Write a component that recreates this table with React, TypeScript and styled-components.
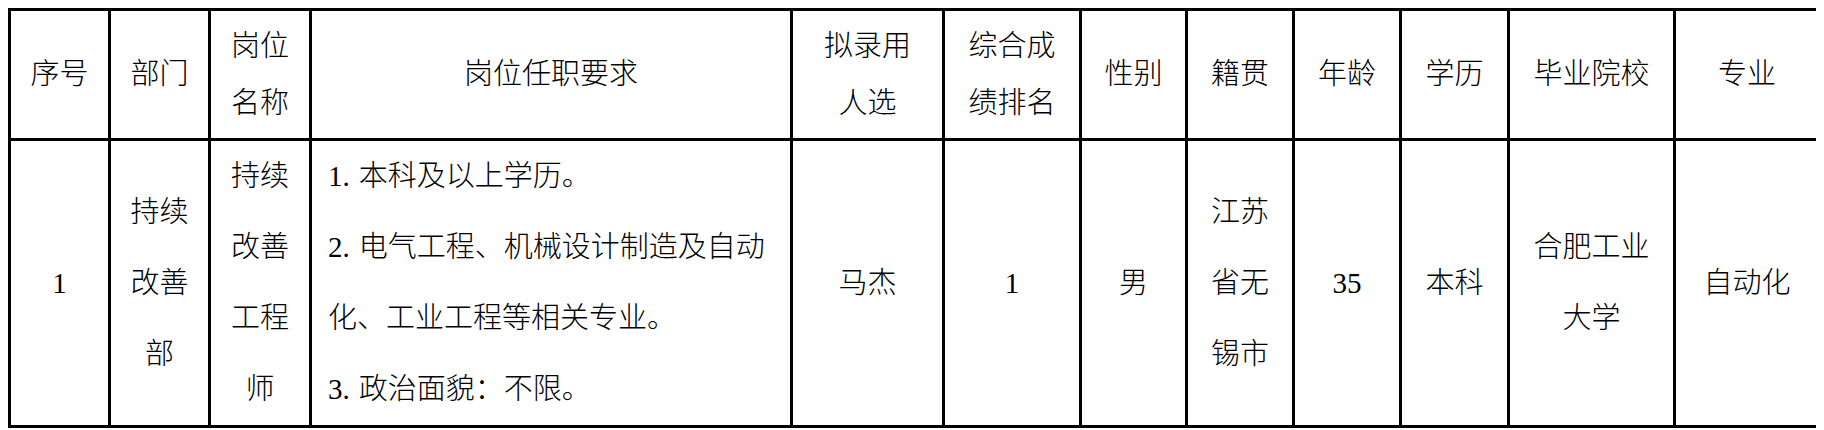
import styled, { createGlobalStyle } from "styled-components";

const GlobalStyle = createGlobalStyle`
  body {
    margin: 8px;
    background: #fff;
  }
`;

const columns = [100, 100, 101, 481, 152, 137, 106, 107, 107, 108, 166, 145];

const App: React.FC = () => {
  return (
    <>
      <GlobalStyle />
      <Table>
        <colgroup>
          {columns.map((w, i) => (
            <Col key={i} $w={w} />
          ))}
        </colgroup>
        <thead>
          <HeadRow>
            <HeadCell>序号</HeadCell>
            <HeadCell>部门</HeadCell>
            <HeadCell>
              岗位
              <br />
              名称
            </HeadCell>
            <HeadCell>岗位任职要求</HeadCell>
            <HeadCell>
              拟录用
              <br />
              人选
            </HeadCell>
            <HeadCell>
              综合成
              <br />
              绩排名
            </HeadCell>
            <HeadCell>性别</HeadCell>
            <HeadCell>籍贯</HeadCell>
            <HeadCell>年龄</HeadCell>
            <HeadCell>学历</HeadCell>
            <HeadCell>毕业院校</HeadCell>
            <HeadCell>专业</HeadCell>
          </HeadRow>
        </thead>
        <tbody>
          <BodyRow>
            <BodyCell>1</BodyCell>
            <BodyCell>
              持续
              <br />
              改善
              <br />
              部
            </BodyCell>
            <BodyCell>
              持续
              <br />
              改善
              <br />
              工程
              <br />
              师
            </BodyCell>
            <BodyCell $align="left">
              <Num>1.</Num>本科及以上学历。
              <br />
              <Num>2.</Num>电气工程、机械设计制造及自动化、工业工程等相关专业。
              <br />
              <Num>3.</Num>政治面貌：不限。
            </BodyCell>
            <BodyCell>马杰</BodyCell>
            <BodyCell>1</BodyCell>
            <BodyCell>男</BodyCell>
            <BodyCell>
              江苏
              <br />
              省无
              <br />
              锡市
            </BodyCell>
            <BodyCell>35</BodyCell>
            <BodyCell>本科</BodyCell>
            <BodyCell>
              合肥工业
              <br />
              大学
            </BodyCell>
            <BodyCell>自动化</BodyCell>
          </BodyRow>
        </tbody>
      </Table>
    </>
  );
};

const Table = styled.table`
  width: 1810px;
  table-layout: fixed;
  border-collapse: collapse;
  border: 3px solid #000;

  font-family: "Liberation Serif", "Noto Sans CJK SC", serif;
  font-size: 29px;
  font-weight: 300;
  color: #000;
`;

const Col = styled.col<{ $w: number }>`
  width: ${(p) => p.$w}px;
`;

const HeadRow = styled.tr`
  height: 130px;
`;

const BodyRow = styled.tr`
  height: 283px;
`;

const HeadCell = styled.th`
  border: 3px solid #000;
  padding: 0 10px;
  font-weight: 300;
  line-height: 57px;
  text-align: center;
  vertical-align: middle;
`;

const BodyCell = styled.td<{ $align?: "left" | "center" }>`
  border: 3px solid #000;
  padding: 0 ${(p) => (p.$align === "left" ? "16px" : "10px")};
  line-height: 71px;
  text-align: ${(p) => p.$align ?? "center"};
  vertical-align: middle;
`;

const Num = styled.span`
  margin-right: 9px;
`;

export default App;
